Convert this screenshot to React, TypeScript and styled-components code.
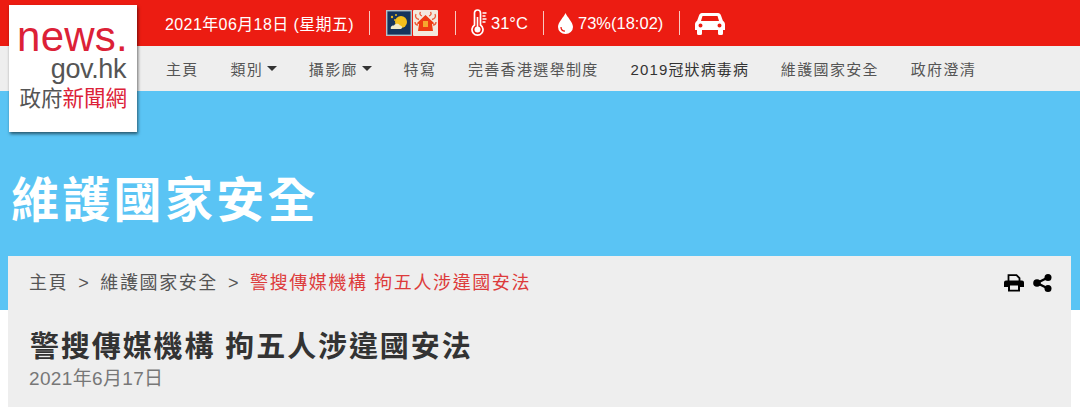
import React from "react";
import styled, { createGlobalStyle } from "styled-components";

const Global = createGlobalStyle`
  html, body { margin: 0; padding: 0; background: #fff; }
  body { font-family: "Liberation Sans", "Noto Sans CJK TC", sans-serif; overflow: hidden; }
`;
const Page = styled.div`width: 1080px; height: 407px; overflow: hidden; position: relative;`;
const Header = styled.header`position: relative;`;
const TopBar = styled.div`
  height: 46px; background: #ec1c12; color: #fff; display: flex; align-items: center;
  padding-left: 165px;
`;
const DateText = styled.span`width: 204px; white-space: nowrap; font-size: 16px; letter-spacing: .4px;`;
const Section = styled.div<{ $w: number }>`
  width: ${p => p.$w}px; height: 24px; box-sizing: border-box; border-left: 1px solid #f8c8c0;
  display: flex; align-items: center; flex: none; white-space: nowrap; font-size: 16.5px;
`;
const NavBar = styled.nav`
  height: 45px; background: #eee; display: flex; align-items: center; padding-left: 166px;
  gap: 31.7px; font-size: 15px; letter-spacing: 1.35px; color: #444;
`;
const NavItem = styled.span<{ $dark?: boolean }>`
  white-space: nowrap; display: flex; align-items: center; color: ${p => p.$dark ? "#333" : "#555"};
  letter-spacing: ${p => p.$dark ? "1.15px" : "1.35px"};
`;
const Caret = styled.i`
  width: 0; height: 0; margin-left: 4px; border-left: 5px solid transparent; border-right: 5px solid transparent;
  border-top: 5px solid #333;
`;
const Logo = styled.div`
  position: absolute; left: 9px; top: 5px; width: 128px; height: 127px; background: #fff;
  box-shadow: 1px 2px 3px rgba(0,0,0,.55); box-sizing: border-box; display: flex; flex-direction: column;
  align-items: flex-end; padding-right: 10px;
`;
const LogoNews = styled.div`
  font-size: 42px; line-height: 38px; color: #dc2137; margin-top: 13px; letter-spacing: .25px; margin-right: -1px;
`;
const LogoGov = styled.div`font-size: 27px; line-height: 27px; color: #555; letter-spacing: -.4px; margin-top: 0; margin-right: 1px;`;
const LogoCn = styled.div`font-size: 21.5px; line-height: 26px; color: #555; margin-top: 3px; white-space: nowrap; span { color: #dc2137; }`;
const Banner = styled.section`height: 219px; background: #5ac4f4; padding: 82px 0 0 11px; box-sizing: border-box;`;
const BannerTitle = styled.h1`
  margin: 0; font-size: 48px; line-height: 56px; font-weight: 700; color: #fff; letter-spacing: 3.3px;
`;
const Card = styled.main`
  margin: -54px 9px 0 8px; height: 151px; background: #eee; box-sizing: border-box; padding: 13px 19px 0 21px;
`;
const Crumbs = styled.div`
  display: flex; align-items: center; font-size: 18px; line-height: 28px; letter-spacing: 1.6px; color: #555; white-space: nowrap;
`;
const CrumbSep = styled.span`margin: 0 10px;`;
const CrumbNow = styled.span`color: #dd3b3b;`;
const Tools = styled.div`margin-left: auto; display: flex; align-items: center; gap: 9px;`;
const Title = styled.h2`
  margin: 32px 0 0 1px; font-size: 29px; line-height: 36px; font-weight: 700; color: #333; letter-spacing: 1.9px; white-space: nowrap;
`;
const Sub = styled.div`font-size: 19px; line-height: 22px; color: #777; margin-top: 3px; letter-spacing: .35px;`;
const Tile = styled.svg`display: block; flex: none;`;

export default function App() {
  return (
    <Page>
      <Global />
      <Header>
        <TopBar>
          <DateText>2021年06月18日 (星期五)</DateText>
          <Section $w={86}>
            <Tile width="26" height="26" viewBox="0 0 26 26" style={{ marginLeft: 16, marginRight: 1 }}>
              <rect x=".7" y=".7" width="24.6" height="24.6" fill="#15345c" stroke="#b5c0c8" strokeWidth="1.4" />
              <circle cx="15" cy="12" r="6" fill="#f4bf1c" />
              <path d="M5 19c-1-2 1-4 3-3.500 1-2.500 5-2.500 6 0 2 0 3 2.500 1 3.500H6z" fill="#efe9c8" />
              <circle cx="6" cy="7" r="1.200" fill="#e8b820" /><circle cx="9" cy="10" r="1" fill="#e8b820" /><circle cx="10" cy="5" r="1" fill="#e8b820" />
            </Tile>
            <Tile width="25" height="26" viewBox="0 0 25 26">
              <rect width="25" height="26" rx="1" fill="#f3e9de" />
              <path d="M12.500 5l9 8.500-2.500.5 1 7H5l1-7-2.500-.5z" fill="#ee3a12" />
              <path d="M3 4c-1.500 3 .5 5 3 5.500M22 4c1.500 3-.5 5-3 5.500M7.500 2c-1.500 2 0 3.500 1.500 4M17.500 2c1.500 2 0 3.500-1.500 4M2 12c0 2 1 3 3 3M23 12c0 2-1 3-3 3" stroke="#ec5a38" strokeWidth="1.300" fill="none" />
              <rect x="10" y="11" width="5" height="6" fill="#f6a82e" />
            </Tile>
          </Section>
          <Section $w={88}>
            <Tile width="18" height="28" viewBox="0 0 18 28" style={{ marginLeft: 15, marginRight: 2 }}>
              <path d="M3.500 16V4a3 3 0 0 1 6 0v12a5.500 5.500 0 1 1-6 0z" fill="none" stroke="#fff" strokeWidth="1.700" />
              <circle cx="6.500" cy="20.500" r="3" fill="#fff" />
              <path d="M6.500 20V8" stroke="#fff" strokeWidth="1.600" />
              <path d="M11.500 4h4M11.500 7h3M11.500 10h4M11.500 13h3" stroke="#fff" strokeWidth="1.300" />
            </Tile>
            31°C
          </Section>
          <Section $w={136}>
            <Tile width="15" height="21" viewBox="0 0 15 21" style={{ marginLeft: 14, marginRight: 5 }}>
              <path d="M7.500 0C9 4 15 9 15 14a7.500 7 0 0 1-15 0C0 9 6 4 7.500 0z" fill="#fff" />
              <path d="M3 14c0 2 1.500 4 4 4.200" stroke="#ec1c12" strokeWidth="1.300" fill="none" />
            </Tile>
            73%(18:02)
          </Section>
          <Section $w={60}>
            <Tile width="30" height="23" viewBox="0 0 30 23" style={{ marginLeft: 15 }}>
              <path fillRule="evenodd" fill="#fff" d="M7 1h16c1.500 0 2.500 1 3 2.500L28 9c1.300.6 2 2 2 3.500V18h-2v3.500a1.500 1.500 0 0 1-1.500 1.500h-2a1.500 1.500 0 0 1-1.500-1.500V18H7v3.500A1.500 1.500 0 0 1 5.500 23h-2A1.500 1.500 0 0 1 2 21.500V18H0v-5.500C0 11 .7 9.600 2 9l2-5.500C4.500 2 5.500 1 7 1zM7.500 4L6 9h18l-1.500-5zM5.500 11.500a2 2 0 1 0 0 4 2 2 0 0 0 0-4zM24.500 11.500a2 2 0 1 0 0 4 2 2 0 0 0 0-4z" />
            </Tile>
          </Section>
        </TopBar>
        <NavBar>
          <NavItem>主頁</NavItem>
          <NavItem>類別<Caret /></NavItem>
          <NavItem>攝影廊<Caret /></NavItem>
          <NavItem>特寫</NavItem>
          <NavItem>完善香港選舉制度</NavItem>
          <NavItem $dark>2019冠狀病毒病</NavItem>
          <NavItem>維護國家安全</NavItem>
          <NavItem>政府澄清</NavItem>
        </NavBar>
        <Logo>
          <LogoNews>news.</LogoNews>
          <LogoGov>gov.hk</LogoGov>
          <LogoCn>政府<span>新聞網</span></LogoCn>
        </Logo>
      </Header>
      <Banner><BannerTitle>維護國家安全</BannerTitle></Banner>
      <Card>
        <Crumbs>
          主頁<CrumbSep>&gt;</CrumbSep>維護國家安全<CrumbSep>&gt;</CrumbSep><CrumbNow>警搜傳媒機構 拘五人涉違國安法</CrumbNow>
          <Tools>
            <svg width="20" height="18" viewBox="0 0 20 18">
              <path d="M4.500 7V1.200h8l3 3V7" fill="none" stroke="#000" strokeWidth="1.800" />
              <path fillRule="evenodd" d="M2 6.500h16a2 2 0 0 1 2 2V13h-4v4.500H4V13H0V8.500a2 2 0 0 1 2-2zM6 11.500v4.300h8v-4.300z" />
            </svg>
            <svg width="19" height="18" viewBox="0 0 19 18">
              <path d="M15 3.500L4 9l11 5.500" fill="none" stroke="#000" strokeWidth="2.400" />
              <circle cx="15" cy="3.500" r="3.500" /><circle cx="15" cy="14.500" r="3.500" /><circle cx="4" cy="9" r="3.800" />
            </svg>
          </Tools>
        </Crumbs>
        <Title>警搜傳媒機構 拘五人涉違國安法</Title>
        <Sub>2021年6月17日</Sub>
      </Card>
    </Page>
  );
}
